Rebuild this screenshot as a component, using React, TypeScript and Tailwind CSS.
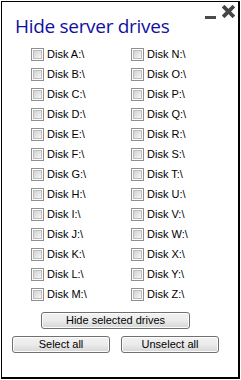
import React from "react";

const left = ["A", "B", "C", "D", "E", "F", "G", "H", "I", "J", "K", "L", "M"];
const right = ["N", "O", "P", "Q", "R", "S", "T", "U", "V", "W", "X", "Y", "Z"];

function Box() {
  return (
    <span className="w-[13px] h-[13px] border border-[#8e8f8f] bg-white p-[1px] flex shrink-0">
      <span className="flex-1 border border-[#bcbcbc] bg-gradient-to-br from-[#d2d2d2] to-[#f6f6f6]" />
    </span>
  );
}

function Item({ l }: { l: string }) {
  return (
    <div className="flex items-center h-[13px]">
      <Box />
      <span className="ml-[3px] text-[11px] leading-[13px] text-black">{`Disk ${l}:\\`}</span>
    </div>
  );
}

function Btn({ children, w }: { children: React.ReactNode; w: string }) {
  return (
    <button
      className={`${w} h-[17px] border border-[#707070] rounded-[3px] bg-gradient-to-b from-[#f2f2f2] via-[#ebebeb] to-[#d6d6d6] text-[11px] leading-[15px] text-black flex items-center justify-center shadow-[inset_0_0_0_1px_#fcfcfc]`}
    >
      {children}
    </button>
  );
}

export default function App() {
  return (
    <div
      className="w-[241px] h-[380px] bg-white pl-[1px] pt-[1px]"
      style={{ fontFamily: '"Liberation Sans", Arial, sans-serif' }}
    >
      <div className="w-[239px] h-[378px] border-l border-t border-r-2 border-b-2 border-black flex flex-col">
        <div className="h-[46px] flex items-start">
          <div
            className="pl-[13px] pt-[9px] text-[19px] leading-[30px] tracking-[-0.3px] text-[#1010a0]"
            style={{ fontFamily: '"Open Sans", sans-serif' }}
          >
            Hide server drives
          </div>
          <div className="ml-auto flex items-start pt-[3px] pr-[3px]">
            <svg width="11" height="16" viewBox="0 0 11 16" className="mr-[6px]">
              <rect x="0" y="11" width="11" height="3" fill="#4a4a4a" />
            </svg>
            <svg width="13" height="13" viewBox="0 0 13 13">
              <path d="M2.5 2.5 L10.5 10.5 M10.5 2.5 L2.5 10.5" stroke="#454545" strokeWidth="3.8" strokeLinecap="square" />
            </svg>
          </div>
        </div>
        <div className="flex pl-[29px]">
          <div className="w-[100px] flex flex-col gap-[7px]">
            {left.map((l) => (
              <Item key={l} l={l} />
            ))}
          </div>
          <div className="flex flex-col gap-[7px]">
            {right.map((l) => (
              <Item key={l} l={l} />
            ))}
          </div>
        </div>
        <div className="mt-[11px] pl-[39px]">
          <Btn w="w-[149px]">Hide selected drives</Btn>
        </div>
        <div className="mt-[7px] flex pl-[10px]">
          <Btn w="w-[98px]">Select all</Btn>
          <div className="ml-[11px]">
            <Btn w="w-[98px]">Unselect all</Btn>
          </div>
        </div>
      </div>
    </div>
  );
}
